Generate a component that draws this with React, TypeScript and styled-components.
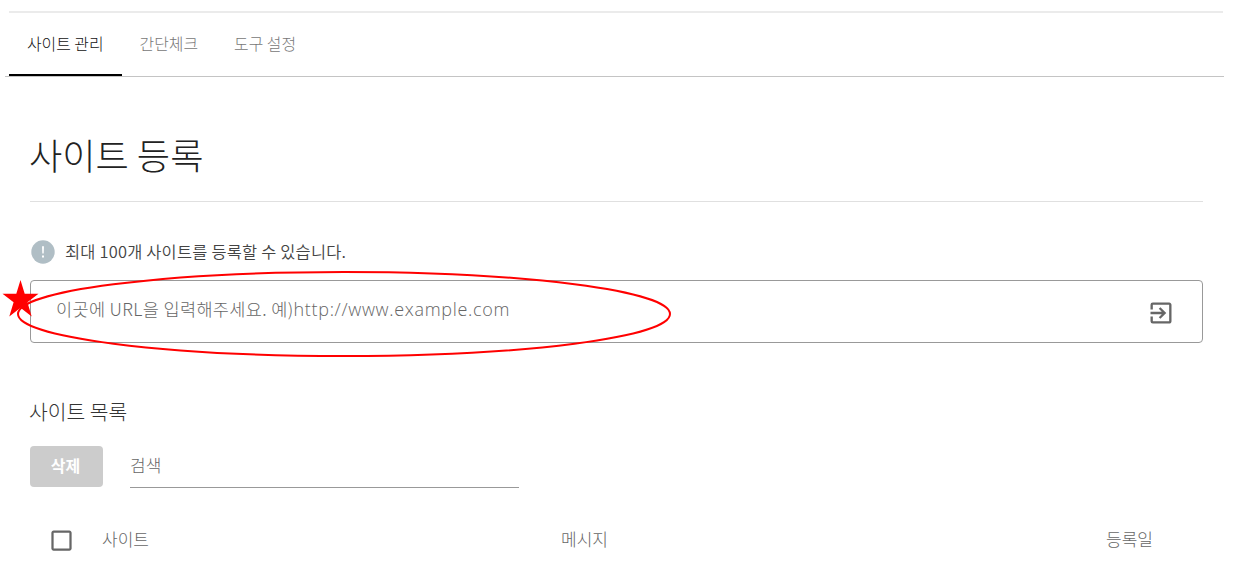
import React from 'react';
import styled, { createGlobalStyle } from 'styled-components';
import { MdExitToApp, MdCheckBoxOutlineBlank } from 'react-icons/md';

const tabs = ['사이트 관리', '간단체크', '도구 설정'];

const App: React.FC = () => (
    <Page>
        <GlobalStyle />
        <TopRule />
        <Tabs>
            {tabs.map((label, i) => (
                <Tab key={label} active={i === 0 ? 'true' : undefined}>{label}</Tab>
            ))}
        </Tabs>
        <Content>
            <Title>사이트 등록</Title>
            <Notice>
                <NoticeIcon viewBox="0 0 24 24">
                    <circle cx="12" cy="12" r="11.7" fill="#b0bec5" />
                    <path d="M11 6.2h2l-.3 7.2h-1.4zM11 15.4h2v2h-2z" fill="#fff" />
                </NoticeIcon>
                <NoticeText>최대 100개 사이트를 등록할 수 있습니다.</NoticeText>
            </Notice>
            <UrlField>
                <UrlText>이곳에 URL을 입력해주세요. 예)<Latin>http://www.example.com</Latin></UrlText>
                <MdExitToApp size={28} />
                <Marker viewBox="0 0 680 96">
                    <ellipse cx="344" cy="49" rx="326" ry="42" fill="none" stroke="#f00" strokeWidth="2" />
                    <path d="M20.5 15L24.7 28.8H38.5L27.4 37.3L31.7 51.5L20.5 42.8L9.3 51.5L13.6 37.3L2.5 28.8H16.3Z" fill="#f00" />
                </Marker>
            </UrlField>
            <ListTitle>사이트 목록</ListTitle>
            <Tools>
                <DeleteButton>삭제</DeleteButton>
                <Search>검색</Search>
            </Tools>
            <HeadRow>
                <MdCheckBoxOutlineBlank size={27} />
                <HeadCell>사이트</HeadCell>
                <HeadCell>메시지</HeadCell>
                <HeadCell>등록일</HeadCell>
            </HeadRow>
        </Content>
    </Page>
);

export default App;

const GlobalStyle = createGlobalStyle`
    body {
        margin: 0;
        background: #fff;
        overflow: hidden;
    }

    * {
        box-sizing: border-box;
    }
`;

const Page = styled.div`
    height: 570px;
    padding-top: 11px;
    overflow: hidden;
    font-family: 'Noto Sans CJK KR', sans-serif;
    font-weight: 300;
    font-size: 16px;
    color: #333;
    white-space: nowrap;
`;

const TopRule = styled.div`
    height: 2px;
    margin: 0 28px 0 9px;
    background: #ebebeb;
`;

const Tabs = styled.div`
    display: flex;
    height: 64px;
    margin: 0 27px 0 5px;
    padding-left: 4px;
    border-bottom: 1px solid #c4c4c4;
`;

const Tab = styled.div<{ active?: string; }>`
    height: 63px;
    padding: 0 18px;
    line-height: 61px;
    font-size: 15.9px;
    color: ${({ active }) => active ? '#111' : '#777'};
    border-bottom: ${({ active }) => active ? '2px solid #000' : 'none'};
`;

const Content = styled.div`
    width: 1173px;
    margin-left: 30px;
`;

const Title = styled.h1`
    height: 125px;
    margin: 0;
    padding: 50px 0 0;
    line-height: 54px;
    font-size: 36.2px;
    font-weight: 300;
    text-indent: -1px;
    color: #222;
    border-bottom: 1px solid #e0e0e0;
`;

const Notice = styled.div`
    display: flex;
    align-items: center;
    gap: 10px;
    height: 24px;
    margin: 38px 0 16px 1px;
`;

const NoticeIcon = styled.svg`
    width: 24px;
    height: 24px;
`;

const NoticeText = styled.span`
    margin-top: -3px;
    font-size: 16.4px;
    font-weight: 350;
    letter-spacing: 0.22px;
    color: #444;
`;

const UrlField = styled.div`
    position: relative;
    display: flex;
    align-items: center;
    justify-content: space-between;
    height: 63px;
    padding: 2px 27px 0 25px;
    border: 1px solid #999;
    border-radius: 4px;
    color: #666;
`;

const UrlText = styled.span`
    margin-top: -8px;
    font-size: 17.5px;
    letter-spacing: 0.36px;
`;

const Latin = styled.span`
    font-family: 'Open Sans', 'Noto Sans', sans-serif;
    font-size: 18px;
    letter-spacing: 0.68px;
`;

const Marker = styled.svg`
    position: absolute;
    left: -31px;
    top: -16px;
    width: 680px;
    height: 96px;
`;

const ListTitle = styled.h2`
    height: 30px;
    margin: 54px 0 19px -1px;
    line-height: 29px;
    font-size: 20.4px;
    font-weight: 300;
`;

const Tools = styled.div`
    display: flex;
    gap: 27px;
    height: 42px;
`;

const DeleteButton = styled.button`
    width: 73px;
    height: 41px;
    padding: 0 2px 3px 0;
    border: 0;
    border-radius: 4px;
    background: #ccc;
    color: #fff;
    font: 700 16px 'Noto Sans CJK KR', sans-serif;
`;

const Search = styled.div`
    width: 389px;
    height: 42px;
    line-height: 38px;
    font-size: 17px;
    color: #666;
    border-bottom: 1px solid #999;
`;

const HeadRow = styled.div`
    display: grid;
    grid-template-columns: 54px 459px 545px auto;
    align-items: center;
    height: 30px;
    margin: 37px 0 0 18px;
    color: #666;
`;

const HeadCell = styled.span`
    font-size: 17px;
    margin-top: -4px;
`;
